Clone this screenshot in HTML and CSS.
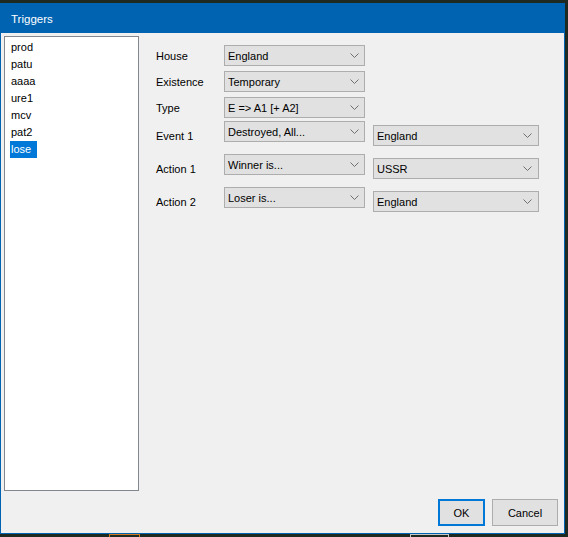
FILE: index.html
```html
<!DOCTYPE html>
<html lang="en">
<head>
  <meta charset="UTF-8" />
  <title>Triggers</title>
  <link rel="stylesheet" href="styles.css">
</head>
<body>

<div class="desk-item desk-orange"></div>
<div class="desk-item desk-gray"></div>

<div class="window">
  <div class="titlebar">Triggers</div>

  <div class="client">
    <ul class="listbox">
      <li>prod</li>
      <li>patu</li>
      <li>aaaa</li>
      <li>ure1</li>
      <li>mcv</li>
      <li>pat2</li>
      <li class="selected">lose</li>
    </ul>

    <div class="right">
      <div class="form">
        <div class="row">
          <span class="label">House</span>
          <div class="combo"><span>England</span><svg width="9" height="5"><path d="M0.5 0.5 L4.5 4.5 L8.5 0.5" /></svg></div>
        </div>
        <div class="row">
          <span class="label">Existence</span>
          <div class="combo"><span>Temporary</span><svg width="9" height="5"><path d="M0.5 0.5 L4.5 4.5 L8.5 0.5" /></svg></div>
        </div>
        <div class="row row-type">
          <span class="label">Type</span>
          <div class="combo"><span>E =&gt; A1 [+ A2]</span><svg width="9" height="5"><path d="M0.5 0.5 L4.5 4.5 L8.5 0.5" /></svg></div>
        </div>
        <div class="row row-wide">
          <span class="label">Event 1</span>
          <div class="combo"><span>Destroyed, All...</span><svg width="9" height="5"><path d="M0.5 0.5 L4.5 4.5 L8.5 0.5" /></svg></div>
          <div class="combo combo-b"><span>England</span><svg width="9" height="5"><path d="M0.5 0.5 L4.5 4.5 L8.5 0.5" /></svg></div>
        </div>
        <div class="row row-wide">
          <span class="label">Action 1</span>
          <div class="combo"><span>Winner is...</span><svg width="9" height="5"><path d="M0.5 0.5 L4.5 4.5 L8.5 0.5" /></svg></div>
          <div class="combo combo-b"><span>USSR</span><svg width="9" height="5"><path d="M0.5 0.5 L4.5 4.5 L8.5 0.5" /></svg></div>
        </div>
        <div class="row row-wide">
          <span class="label">Action 2</span>
          <div class="combo"><span>Loser is...</span><svg width="9" height="5"><path d="M0.5 0.5 L4.5 4.5 L8.5 0.5" /></svg></div>
          <div class="combo combo-b"><span>England</span><svg width="9" height="5"><path d="M0.5 0.5 L4.5 4.5 L8.5 0.5" /></svg></div>
        </div>
      </div>

      <div class="buttons">
        <button class="btn btn-ok">OK</button>
        <button class="btn btn-cancel">Cancel</button>
      </div>
    </div>
  </div>
</div>

</body>
</html>
```

FILE: styles.css
```css
html, body {
  margin: 0;
  padding: 0;
}

body {
  width: 568px;
  height: 537px;
  overflow: hidden;
  position: relative;
  background: #1e2922;
  font-family: "Liberation Sans", Arial, sans-serif;
  font-size: 11px;
  color: #000;
}

/* stuff on the desktop behind the dialog */
.desk-item {
  position: absolute;
  top: 534px;
  height: 8px;
  box-sizing: border-box;
}
.desk-orange {
  left: 109px;
  width: 31px;
  border: 1px solid #d07a22;
}
.desk-gray {
  left: 410px;
  width: 39px;
  border: 1px solid #c8c8c8;
}

.window {
  position: relative;
  margin-top: 3px;
  width: 565px;
  height: 531px;
  box-sizing: border-box;
  border: 1px solid #0063b1;
  background: #f0f0f0;
  display: flex;
  flex-direction: column;
}

.titlebar {
  height: 29px;
  background: #0063b1;
  color: white;
  font-size: 11.5px;
  line-height: 30px;
  padding-left: 10px;
}

.client {
  flex: 1;
  display: flex;
  gap: 17px;
  padding: 3px 6px 7px 3px;
}

.listbox {
  list-style: none;
  margin: 0;
  width: 135px;
  height: 455px;
  box-sizing: border-box;
  padding: 2px 0 0 5px;
  border: 1px solid #828790;
  background: white;
}

.listbox li {
  width: fit-content;
  height: 17px;
  line-height: 17px;
  padding: 0 6px 0 1px;
}

.listbox li.selected {
  background: #0078d7;
  color: white;
}

.right {
  flex: 1;
  display: flex;
  flex-direction: column;
  justify-content: space-between;
}

.form {
  padding-top: 9px;
}

.row {
  display: flex;
  align-items: flex-start;
  height: 26px;
}
.row-type {
  height: 24px;
}
.row-wide {
  height: 33px;
}

.label {
  width: 68px;
  line-height: 13px;
  margin-top: 5px;
}
.row-wide .label {
  margin-top: 9px;
}

.combo {
  width: 141px;
  height: 21px;
  box-sizing: border-box;
  border: 1px solid #adadad;
  background: #e1e1e1;
  display: flex;
  align-items: center;
  justify-content: space-between;
  padding: 0 5px 0 3px;
}

.combo svg path {
  stroke: #707070;
  stroke-width: 1;
  fill: none;
}

.combo-b {
  width: 166px;
  margin-left: 8px;
  margin-top: 4px;
  padding-right: 6px;
}

.buttons {
  display: flex;
  justify-content: flex-end;
  gap: 7px;
}

.btn {
  height: 27px;
  box-sizing: border-box;
  background: #e1e1e1;
  border: 1px solid #adadad;
  font-family: "Liberation Sans", Arial, sans-serif;
  font-size: 11px;
  color: #000;
  padding: 0;
}

.btn-ok {
  width: 47px;
  border: 2px solid #0078d7;
}

.btn-cancel {
  width: 66px;
}
```
